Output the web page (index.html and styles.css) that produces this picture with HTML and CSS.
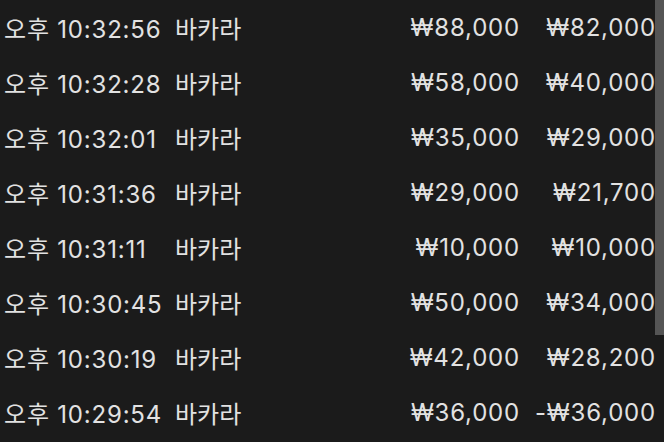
FILE: index.html
```html
<!DOCTYPE html>
<html lang="ko">
<head>
<meta charset="utf-8">
<link rel="stylesheet" href="styles.css">
</head>
<body>
<div class="list">
  <div class="row"><span class="time">오후 10:32:56</span><span class="game">바카라</span><span class="bet">₩88,000</span><span class="win">₩82,000</span></div>
  <div class="row"><span class="time">오후 10:32:28</span><span class="game">바카라</span><span class="bet">₩58,000</span><span class="win">₩40,000</span></div>
  <div class="row"><span class="time">오후 10:32:01</span><span class="game">바카라</span><span class="bet">₩35,000</span><span class="win">₩29,000</span></div>
  <div class="row"><span class="time">오후 10:31:36</span><span class="game">바카라</span><span class="bet">₩29,000</span><span class="win">₩21,700</span></div>
  <div class="row"><span class="time">오후 10:31:11</span><span class="game">바카라</span><span class="bet">₩10,000</span><span class="win">₩10,000</span></div>
  <div class="row"><span class="time">오후 10:30:45</span><span class="game">바카라</span><span class="bet">₩50,000</span><span class="win">₩34,000</span></div>
  <div class="row"><span class="time">오후 10:30:19</span><span class="game">바카라</span><span class="bet">₩42,000</span><span class="win">₩28,200</span></div>
  <div class="row"><span class="time">오후 10:29:54</span><span class="game">바카라</span><span class="bet">₩36,000</span><span class="win">-₩36,000</span></div>
</div>
<div class="scrollbar"></div>
</body>
</html>
```
FILE: styles.css
```css
html, body {
  margin: 0;
  padding: 0;
  background: #1b1b1b;
  width: 664px;
  height: 442px;
  overflow: hidden;
}
body {
  position: relative;
  font-family: Inter, "Noto Sans CJK KR", sans-serif;
  font-size: 24px;
  letter-spacing: 0.8px;
  color: #e2e2e2;
}
.list {
  display: flex;
  flex-direction: column;
}
.row {
  display: flex;
  align-items: center;
  height: 55px;
  padding-left: 4px;
}
.time {
  width: 171px;
}
.game {
  flex: 1;
  letter-spacing: 0;
}
.bet {
  width: 140px;
  text-align: right;
  margin-right: 2px;
}
.win {
  width: 134px;
  text-align: right;
  margin-right: 8px;
}
.scrollbar {
  position: absolute;
  right: 0;
  top: 0;
  width: 9px;
  height: 335px;
  background: #555;
}
```
